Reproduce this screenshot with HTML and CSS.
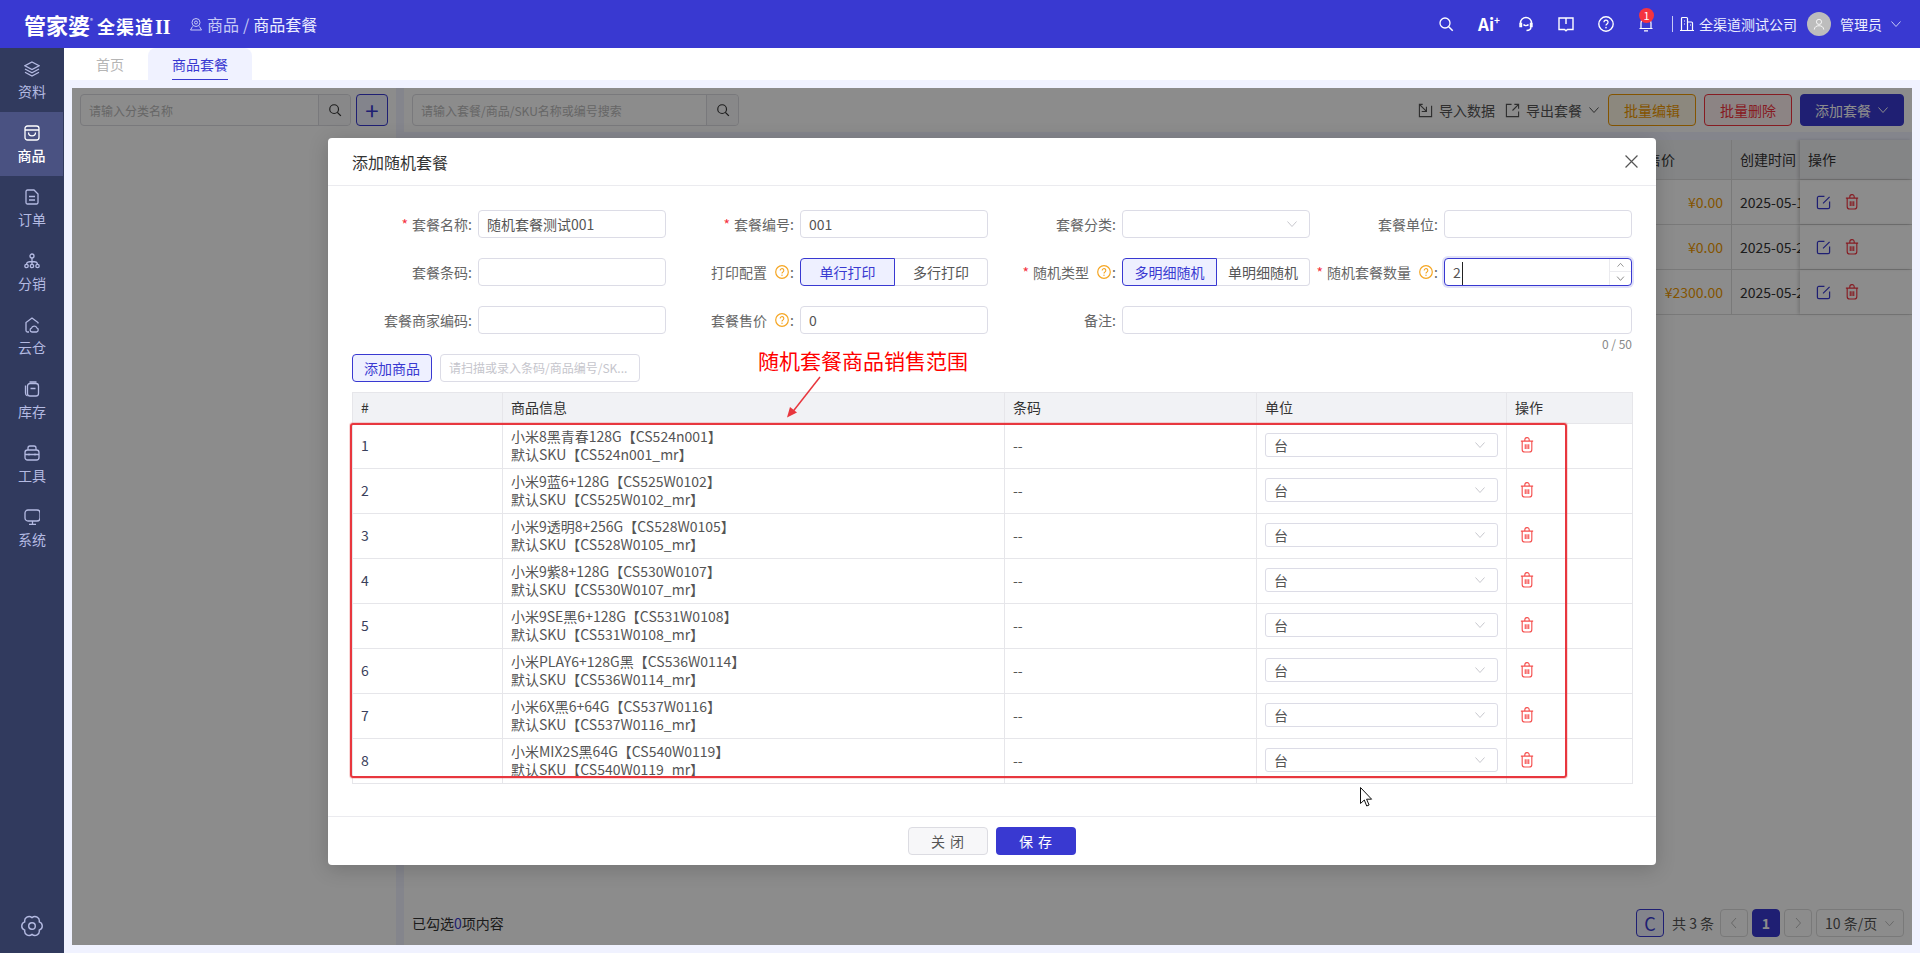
FILE: index.html
```html
<!DOCTYPE html>
<html lang="en">
<head>
    <meta charset="UTF-8">
    <meta name="viewport" content="width=device-width, initial-scale=1.0">
    <title>商品套餐</title>
    <link rel="stylesheet" href="styles.css">
</head>
<body>
    <svg class="defs" width="0" height="0">
        <symbol id="i-trash" viewBox="0 0 16 18">
            <path d="M1 4.5h14M5.5 4.5V3a2.500 2.500 0 0 1 5 0v1.500M2.500 4.500V14a3 3 0 0 0 3 3h5a3 3 0 0 0 3-3V4.500M6 8v5.500M8 8v5.500M10 8v5.500" fill="none" stroke="currentColor" stroke-width="1.3"/>
        </symbol>
        <symbol id="i-edit" viewBox="0 0 16 16">
            <path d="M9 1.5H3A1.5 1.5 0 0 0 1.500 3v10A1.500 1.500 0 0 0 3 14.500h10a1.500 1.500 0 0 0 1.500-1.500V7M14.500 2 7.500 9" fill="none" stroke="currentColor" stroke-width="1.3"/>
        </symbol>
        <symbol id="i-chev" viewBox="0 0 12 12">
            <path d="M1.5 3.5 6 8.5l4.500-5" fill="none" stroke="currentColor" stroke-width="1"/>
        </symbol>
        <symbol id="i-help" viewBox="0 0 14 14">
            <circle cx="7" cy="7" r="6.3" fill="none" stroke="currentColor" stroke-width="1.2"/>
            <path d="M5.2 5.4a1.8 1.8 0 1 1 2.800 1.500c-.7.4-1 .8-1 1.500" fill="none" stroke="currentColor" stroke-width="1.1"/>
            <circle cx="7" cy="10.2" r=".7" fill="currentColor"/>
        </symbol>
        <symbol id="i-search" viewBox="0 0 16 16">
            <circle cx="7" cy="7" r="5" fill="none" stroke="currentColor" stroke-width="1.3"/>
            <path d="m10.7 10.7 4 4" fill="none" stroke="currentColor" stroke-width="1.5"/>
        </symbol>
    </svg>

    <header class="topbar">
        <div class="logo"><span class="logo-main">管家婆</span><span class="logo-mark">®</span><span class="logo-sub">全渠道</span><span class="logo-ver">II</span></div>
        <div class="crumbs">
            <svg class="crumb-icon" viewBox="0 0 14 14"><circle cx="7" cy="5.5" r="4" fill="none" stroke="currentColor"/><circle cx="7" cy="5.5" r="1.5" fill="none" stroke="currentColor"/><path d="M3.5 9.5 1.5 13h11l-2-3.500" fill="none" stroke="currentColor"/></svg>
            <span class="crumb-parent">商品</span><span class="crumb-sep">/</span><span class="crumb-current">商品套餐</span>
        </div>
        <div class="top-actions">
            <svg class="top-icon"><use href="#i-search"/></svg>
            <span class="top-ai">Ai<sup>+</sup></span>
            <svg class="top-icon" viewBox="0 0 16 16"><path d="M2.5 9V7a5.500 5.500 0 0 1 11 0v2.500M2 7.500h1.500v3H2zM12.500 7.500H14v3h-1.500zM5.500 8.500c1 1.500 4 1.500 5 0M13 10.500c0 2.500-2 4-4.500 4" fill="none" stroke="currentColor" stroke-width="1.4"/></svg>
            <svg class="top-icon" viewBox="0 0 16 16"><path d="M1 2h14v11.500H9.500L8 14.800 6.500 13.500H1zM8 2v6" fill="none" stroke="currentColor" stroke-width="1.4"/></svg>
            <svg class="top-icon"><use href="#i-help"/></svg>
            <div class="bell">
                <svg class="top-icon" viewBox="0 0 16 16"><path d="M3 12V7a5 5 0 0 1 10 0v5M1.500 12.500h13M6 14.800h4" fill="none" stroke="currentColor" stroke-width="1.2"/></svg>
                <span class="bell-badge">1</span>
            </div>
            <span class="top-divider"></span>
            <svg class="top-build" viewBox="0 0 16 16"><path d="M1 14.500h14M2.500 14.500V2.500a1 1 0 0 1 1-1h4a1 1 0 0 1 1 1v12M8.500 6h4a1 1 0 0 1 1 1v7.500M5 5h1M5 8h1M11 9h1" fill="none" stroke="currentColor" stroke-width="1.2"/></svg>
            <span class="top-company">全渠道测试公司</span>
            <span class="avatar"><svg viewBox="0 0 14 14"><circle cx="7" cy="4.500" r="3" fill="none" stroke="#fff"/><path d="M1.500 13.500c0-6 11-6 11 0" fill="none" stroke="#fff"/></svg></span>
            <span class="top-user">管理员</span>
            <svg class="top-chev"><use href="#i-chev"/></svg>
        </div>
    </header>

    <div class="shell">
        <nav class="sidebar">
            <a class="nav-item"><svg viewBox="0 0 16 16"><path d="M8 1 15 4.800 8 8.600 1 4.800zM1 8l7 3.800L15 8M1 11.200 8 15l7-3.800"/></svg>资料</a>
            <a class="nav-item active"><svg viewBox="0 0 16 16"><rect x="1" y="1" width="14" height="14" rx="2.500"/><path d="M1 5h14M4.500 7.500c0 4.500 7 4.500 7 0"/></svg>商品</a>
            <a class="nav-item"><svg viewBox="0 0 16 16"><path d="M3.500 1h6.500L14 5v8.500a1.500 1.500 0 0 1-1.500 1.500h-9A1.500 1.500 0 0 1 2 13.500v-11A1.500 1.500 0 0 1 3.500 1zM5 7.500h6M5 11h6"/></svg>订单</a>
            <a class="nav-item"><svg viewBox="0 0 16 16"><circle cx="8" cy="3" r="2"/><circle cx="2.500" cy="13" r="1.700"/><circle cx="8" cy="13" r="1.700"/><circle cx="13.500" cy="13" r="1.700"/><path d="M8 5v6.300M8 8.500c-3.500 0-5.500.7-5.500 2.800M8 8.500c3.500 0 5.500.7 5.500 2.800"/></svg>分销</a>
            <a class="nav-item"><svg viewBox="0 0 16 16"><path d="M14 6.500V5.500L8 1 2 5.500v8A1.500 1.500 0 0 0 3.500 15H5"/><path d="M8 15a2 2 0 0 1-.5-3.900 2.800 2.800 0 0 1 5.300-.3A2.200 2.200 0 0 1 12.500 15z"/></svg>云仓</a>
            <a class="nav-item"><svg viewBox="0 0 16 16"><rect x="3.500" y="2.500" width="11" height="12.500" rx="2.500"/><path d="M1.500 4.500v7.500A3 3 0 0 0 3.500 15M5.500 1h7M6.500 7.500h5"/></svg>库存</a>
            <a class="nav-item"><svg viewBox="0 0 16 16"><rect x="1" y="5" width="14" height="10" rx="2.500"/><path d="M4 5V3a2 2 0 0 1 2-2h4a2 2 0 0 1 2 2v2M1 9.500h14M5 8.500v2M11 8.500v2"/></svg>工具</a>
            <a class="nav-item"><svg viewBox="0 0 16 16"><rect x="1" y="1" width="15" height="11" rx="3"/><path d="M8.500 12v3M5 15.300h7"/></svg>系统</a>
            <a class="nav-settings"><svg viewBox="0 0 20 20"><path d="M10 2.400A4 4 0 0 1 16.580 6.200 4 4 0 0 1 16.580 13.800 4 4 0 0 1 10 17.600 4 4 0 0 1 3.420 13.800 4 4 0 0 1 3.420 6.200 4 4 0 0 1 10 2.400z"/><circle cx="10" cy="10" r="3"/></svg></a>
        </nav>

        <main class="main">
            <div class="tabs">
                <span class="tab">首页</span>
                <span class="tab tab-active"><span class="tab-label">商品套餐</span></span>
            </div>

            <div class="content">
                <aside class="tree-panel">
                    <div class="searchbox tree-search">
                        <span class="searchbox-text">请输入分类名称</span>
                        <span class="searchbox-btn"><svg><use href="#i-search"/></svg></span>
                    </div>
                    <button class="add-square">+</button>
                </aside>

                <section class="list-col">
                    <div class="toolbar">
                        <div class="searchbox list-search">
                            <span class="searchbox-text">请输入套餐/商品/SKU名称或编号搜索</span>
                            <span class="searchbox-btn"><svg><use href="#i-search"/></svg></span>
                        </div>
                        <div class="toolbar-right">
                            <span class="tool-link"><svg viewBox="0 0 16 16"><path d="M5 1.500H1.500v13h13V3M1.500 1.500 8.500 8.500M4 9h5V4" fill="none" stroke="currentColor" stroke-width="1.2"/></svg>导入数据</span>
                            <span class="tool-link tool-link-last"><svg viewBox="0 0 16 16"><path d="M7 1.500H1.500v13h13V9M8 8l6.500-6.500M10 1.500h4.500V6" fill="none" stroke="currentColor" stroke-width="1.2"/></svg>导出套餐<svg class="tool-chev"><use href="#i-chev"/></svg></span>
                            <button class="tool-btn tool-orange">批量编辑</button>
                            <button class="tool-btn tool-red">批量删除</button>
                            <button class="tool-btn tool-primary">添加套餐<svg class="tool-chev"><use href="#i-chev"/></svg></button>
                        </div>
                    </div>

                    <div class="list-card">
                        <div class="bg-table">
                            <div class="bg-row bg-head">
                                <span class="bg-price">售价</span><span class="bg-date">创建时间</span><span class="bg-ops">操作</span>
                            </div>
                            <div class="bg-row">
                                <span class="bg-price money">¥0.00</span><span class="bg-date">2025-05-19</span>
                                <span class="bg-ops"><svg class="op-edit"><use href="#i-edit"/></svg><svg class="op-trash"><use href="#i-trash"/></svg></span>
                            </div>
                            <div class="bg-row">
                                <span class="bg-price money">¥0.00</span><span class="bg-date">2025-05-20</span>
                                <span class="bg-ops"><svg class="op-edit"><use href="#i-edit"/></svg><svg class="op-trash"><use href="#i-trash"/></svg></span>
                            </div>
                            <div class="bg-row">
                                <span class="bg-price money">¥2300.00</span><span class="bg-date">2025-05-20</span>
                                <span class="bg-ops"><svg class="op-edit"><use href="#i-edit"/></svg><svg class="op-trash"><use href="#i-trash"/></svg></span>
                            </div>
                        </div>

                        <div class="list-foot">
                            <span class="picked">已勾选<b>0</b>项内容</span>
                            <div class="pager">
                                <span class="pager-refresh">C</span>
                                <span class="pager-total">共 3 条</span>
                                <span class="pager-btn"><svg viewBox="0 0 10 12"><path d="M7 1 2.500 6 7 11" fill="none" stroke="currentColor"/></svg></span>
                                <span class="pager-btn pager-on">1</span>
                                <span class="pager-btn"><svg viewBox="0 0 10 12"><path d="M3 1l4.500 5L3 11" fill="none" stroke="currentColor"/></svg></span>
                                <span class="pager-size">10 条/页<svg class="tool-chev"><use href="#i-chev"/></svg></span>
                            </div>
                        </div>
                    </div>
                </section>

                <div class="overlay"></div>

                <div class="modal">
                    <div class="modal-head">
                        <span class="modal-title">添加随机套餐</span>
                        <svg class="modal-close" viewBox="0 0 12 12"><path d="M.5.500l11 11M11.500.500l-11 11" stroke="currentColor" fill="none" stroke-width="1.1"/></svg>
                    </div>

                    <div class="modal-body">
                        <div class="form-grid">
                            <div class="field">
                                <label class="field-label"><i class="req">*</i>套餐名称:</label>
                                <input class="input" type="text" value="随机套餐测试001">
                            </div>
                            <div class="field">
                                <label class="field-label"><i class="req">*</i>套餐编号:</label>
                                <input class="input" type="text" value="001">
                            </div>
                            <div class="field">
                                <label class="field-label">套餐分类:</label>
                                <div class="input select"><svg class="sel-chev"><use href="#i-chev"/></svg></div>
                            </div>
                            <div class="field">
                                <label class="field-label">套餐单位:</label>
                                <input class="input" type="text">
                            </div>

                            <div class="field">
                                <label class="field-label">套餐条码:</label>
                                <input class="input" type="text">
                            </div>
                            <div class="field">
                                <label class="field-label">打印配置<svg class="help"><use href="#i-help"/></svg>:</label>
                                <div class="segment"><span class="seg seg-on">单行打印</span><span class="seg">多行打印</span></div>
                            </div>
                            <div class="field">
                                <label class="field-label"><i class="req">*</i>随机类型<svg class="help"><use href="#i-help"/></svg>:</label>
                                <div class="segment"><span class="seg seg-on">多明细随机</span><span class="seg">单明细随机</span></div>
                            </div>
                            <div class="field">
                                <label class="field-label"><i class="req">*</i>随机套餐数量<svg class="help"><use href="#i-help"/></svg>:</label>
                                <div class="input number">
                                    <span class="number-val">2</span>
                                    <span class="spin"><svg class="spin-up"><use href="#i-chev"/></svg><svg class="spin-down"><use href="#i-chev"/></svg></span>
                                </div>
                            </div>

                            <div class="field">
                                <label class="field-label">套餐商家编码:</label>
                                <input class="input" type="text">
                            </div>
                            <div class="field">
                                <label class="field-label">套餐售价<svg class="help"><use href="#i-help"/></svg>:</label>
                                <input class="input" type="text" value="0">
                            </div>
                            <div class="field field-wide">
                                <label class="field-label">备注:</label>
                                <div class="remark">
                                    <input class="input" type="text">
                                    <span class="counter">0 / 50</span>
                                </div>
                            </div>
                        </div>

                        <div class="add-row">
                            <button class="add-btn">添加商品</button>
                            <div class="scan-input">请扫描或录入条码/商品编号/SK...</div>
                        </div>

                        <div class="goods-wrap">
                            <table class="goods">
                                <colgroup><col class="c-no"><col class="c-info"><col class="c-code"><col class="c-unit"><col class="c-op"></colgroup>
                                <thead>
                                    <tr><th>#</th><th>商品信息</th><th>条码</th><th>单位</th><th>操作</th></tr>
                                </thead>
                                <tbody>
                                    <tr><td>1</td><td>小米8黑青春128G【CS524n001】<br>默认SKU【CS524n001_mr】</td><td>--</td><td><div class="unit">台<svg class="sel-chev"><use href="#i-chev"/></svg></div></td><td><svg class="row-trash"><use href="#i-trash"/></svg></td></tr>
                                    <tr><td>2</td><td>小米9蓝6+128G【CS525W0102】<br>默认SKU【CS525W0102_mr】</td><td>--</td><td><div class="unit">台<svg class="sel-chev"><use href="#i-chev"/></svg></div></td><td><svg class="row-trash"><use href="#i-trash"/></svg></td></tr>
                                    <tr><td>3</td><td>小米9透明8+256G【CS528W0105】<br>默认SKU【CS528W0105_mr】</td><td>--</td><td><div class="unit">台<svg class="sel-chev"><use href="#i-chev"/></svg></div></td><td><svg class="row-trash"><use href="#i-trash"/></svg></td></tr>
                                    <tr><td>4</td><td>小米9紫8+128G【CS530W0107】<br>默认SKU【CS530W0107_mr】</td><td>--</td><td><div class="unit">台<svg class="sel-chev"><use href="#i-chev"/></svg></div></td><td><svg class="row-trash"><use href="#i-trash"/></svg></td></tr>
                                    <tr><td>5</td><td>小米9SE黑6+128G【CS531W0108】<br>默认SKU【CS531W0108_mr】</td><td>--</td><td><div class="unit">台<svg class="sel-chev"><use href="#i-chev"/></svg></div></td><td><svg class="row-trash"><use href="#i-trash"/></svg></td></tr>
                                    <tr><td>6</td><td>小米PLAY6+128G黑【CS536W0114】<br>默认SKU【CS536W0114_mr】</td><td>--</td><td><div class="unit">台<svg class="sel-chev"><use href="#i-chev"/></svg></div></td><td><svg class="row-trash"><use href="#i-trash"/></svg></td></tr>
                                    <tr><td>7</td><td>小米6X黑6+64G【CS537W0116】<br>默认SKU【CS537W0116_mr】</td><td>--</td><td><div class="unit">台<svg class="sel-chev"><use href="#i-chev"/></svg></div></td><td><svg class="row-trash"><use href="#i-trash"/></svg></td></tr>
                                    <tr><td>8</td><td>小米MIX2S黑64G【CS540W0119】<br>默认SKU【CS540W0119_mr】</td><td>--</td><td><div class="unit">台<svg class="sel-chev"><use href="#i-chev"/></svg></div></td><td><svg class="row-trash"><use href="#i-trash"/></svg></td></tr>
                                </tbody>
                            </table>
                            <div class="note-box"></div>
                            <span class="note-text">随机套餐商品销售范围</span>
                            <svg class="note-arrow" viewBox="0 0 36 42"><path d="M34 1 5 38" fill="none" stroke="#e8373e" stroke-width="1.5"/><path d="M1 41.500 4 31l7 5.500z" fill="#e8373e"/></svg>
                        </div>
                    </div>

                    <div class="modal-foot">
                        <button class="btn-close">关 闭</button>
                        <button class="btn-save">保 存</button>
                    </div>

                    <svg class="cursor" viewBox="0 0 13 20"><path d="M.5.500v16l3.800-3.500 2.400 6 2.400-1-2.500-5.800h5z" fill="#fff" stroke="#111" stroke-width="1"/></svg>
                </div>
            </div>
        </main>
    </div>
</body>
</html>
```

FILE: styles.css
```css
* {
    margin: 0;
    padding: 0;
    box-sizing: border-box;
    font-family: "Noto Sans CJK SC", "Noto Sans", sans-serif;
}

body {
    width: 1920px;
    height: 953px;
    overflow: hidden;
    background: #f0f2ff;
    font-size: 14px;
    color: #333;
}

svg {
    display: block;
}

button {
    border: none;
    background: none;
    font-size: 14px;
}

.defs {
    position: absolute;
}

/* top bar */
.topbar {
    height: 48px;
    background: #3939d1;
    display: flex;
    align-items: center;
    color: #fff;
}

.logo {
    display: flex;
    align-items: baseline;
    width: 189px;
    padding-left: 24px;
    font-weight: 700;
    white-space: nowrap;
}

.logo-main {
    font-size: 22px;
    line-height: 30px;
}

.logo-mark {
    font-size: 6px;
    width: 7px;
    align-self: flex-start;
    line-height: 24px;
    font-weight: 400;
}

.logo-sub {
    font-size: 18px;
    letter-spacing: 1px;
}

.logo-ver {
    font-family: "Liberation Serif", serif;
    font-size: 20px;
    margin-left: 1px;
}

.crumbs {
    display: flex;
    align-items: center;
    font-size: 16px;
}

.crumb-icon {
    width: 14px;
    height: 14px;
    margin-right: 4px;
    color: #c6c9f6;
}

.crumb-parent {
    color: #c6c9f6;
}

.crumb-sep {
    margin: 0 4px;
    color: #c6c9f6;
}

.crumb-current {
    color: #eceeff;
}

.top-actions {
    margin-left: auto;
    display: flex;
    align-items: center;
    height: 48px;
    padding-right: 18px;
}

.top-icon {
    width: 16px;
    height: 16px;
    margin-right: 24px;
}

.top-ai {
    width: 16px;
    margin-right: 24px;
    font-size: 17px;
    font-weight: 700;
    line-height: 16px;
    white-space: nowrap;
}

.top-ai sup {
    font-size: 10px;
    line-height: 0;
}

.bell {
    position: relative;
    width: 16px;
    height: 16px;
}

.bell .top-icon {
    margin: 0;
}

.bell-badge {
    position: absolute;
    top: -8px;
    left: 1px;
    width: 15px;
    height: 15px;
    border-radius: 50%;
    background: #f5333f;
    color: #fff;
    font-size: 11px;
    line-height: 15px;
    text-align: center;
}

.top-divider {
    width: 1px;
    height: 16px;
    background: #c6c9f6;
    margin: 0 6px 0 18px;
}

.top-build {
    width: 16px;
    height: 16px;
    margin-right: 4px;
}

.top-company {
    color: #eceeff;
    margin-right: 10px;
}

.avatar {
    width: 24px;
    height: 24px;
    border-radius: 50%;
    background: #bdbdbd;
    display: flex;
    align-items: center;
    justify-content: center;
    margin-right: 9px;
}

.avatar svg {
    width: 12px;
    height: 12px;
}

.top-user {
    color: #eceeff;
}

.top-chev {
    width: 12px;
    height: 12px;
    margin-left: 8px;
    color: #c6c9f6;
}

/* side nav */
.shell {
    display: flex;
    height: 905px;
}

.sidebar {
    width: 64px;
    background: #313a5e;
    display: flex;
    flex-direction: column;
    flex-shrink: 0;
}

.nav-item {
    height: 64px;
    display: flex;
    flex-direction: column;
    align-items: center;
    padding-top: 13px;
    color: #b4bae2;
    font-size: 14px;
    line-height: 20px;
}

.nav-item svg {
    width: 16px;
    height: 16px;
    margin-bottom: 4px;
    fill: none;
    stroke: currentColor;
    stroke-width: 1.3;
}

.nav-item.active {
    background: #4a5282;
    color: #fff;
    margin-right: 1px;
    font-weight: 500;
}

.nav-settings {
    margin-top: auto;
    height: 38px;
    display: flex;
    justify-content: center;
    color: #b4bae2;
}

.nav-settings svg {
    width: 22px;
    height: 22px;
    fill: none;
    stroke: currentColor;
    stroke-width: 1.3;
}

/* tabs and page */
.main {
    flex: 1;
    display: flex;
    flex-direction: column;
    min-width: 0;
}

.tabs {
    height: 32px;
    background: #fff;
    display: flex;
    flex-shrink: 0;
}

.tab {
    width: 84px;
    padding-left: 8px;
    text-align: center;
    line-height: 32px;
    color: #b5b5b5;
}

.tab-active {
    width: 104px;
    padding-left: 0;
    background: #f0f2ff;
    border-radius: 8px 8px 0 0;
    color: #3939d1;
}

.tab-label {
    display: inline-block;
    height: 32px;
    border-bottom: 1px solid #3939d1;
}

.content {
    position: relative;
    flex: 1;
    margin: 8px;
    display: flex;
    gap: 8px;
}

.tree-panel {
    width: 324px;
    background: #fff;
    padding: 6px 8px;
    display: flex;
    gap: 5px;
    align-items: flex-start;
}

.searchbox {
    height: 32px;
    border: 1px solid #dcdce2;
    border-radius: 4px;
    display: flex;
    align-items: center;
    background: #fff;
}

.tree-search {
    width: 271px;
}

.list-search {
    width: 327px;
}

.searchbox-text {
    flex: 1;
    padding-left: 8px;
    font-size: 12px;
    color: #bbb;
    white-space: nowrap;
}

.searchbox-btn {
    width: 32px;
    height: 30px;
    border-left: 1px solid #dcdce2;
    background: #f7f7f9;
    display: flex;
    align-items: center;
    justify-content: center;
    border-radius: 0 4px 4px 0;
}

.searchbox-btn svg {
    width: 14px;
    height: 14px;
    color: #333;
}

.add-square {
    width: 32px;
    height: 32px;
    border: 1px solid #3939d1;
    border-radius: 4px;
    background: #eef0ff;
    color: #3939d1;
    font-size: 24px;
    line-height: 28px;
}

.list-col {
    flex: 1;
    min-width: 0;
    display: flex;
    flex-direction: column;
    gap: 8px;
}

.toolbar {
    height: 44px;
    background: #fff;
    padding: 6px 8px;
    display: flex;
    align-items: flex-start;
    justify-content: space-between;
}

.toolbar-right {
    display: flex;
    align-items: center;
    height: 32px;
}

.tool-link {
    display: flex;
    align-items: center;
    gap: 6px;
    margin-right: 10px;
    color: #555;
}

.tool-link-last {
    margin-right: 0;
}

.tool-link svg {
    width: 15px;
    height: 15px;
}

.tool-link .tool-chev {
    width: 12px;
    height: 12px;
}

.tool-btn {
    width: 88px;
    height: 32px;
    margin-left: 8px;
    border-radius: 4px;
    border: 1px solid;
}

.tool-orange {
    border-color: #f09a00;
    background: #fff7e6;
    color: #f09a00;
}

.tool-red {
    border-color: #f5333f;
    background: #fff0f0;
    color: #f5333f;
}

.tool-primary {
    width: 104px;
    background: #3939d1;
    border-color: #3939d1;
    color: #fff;
    display: flex;
    align-items: center;
    justify-content: center;
    gap: 6px;
}

.tool-primary svg {
    width: 12px;
    height: 12px;
}

.list-card {
    flex: 1;
    background: #fff;
    display: flex;
    flex-direction: column;
}

.bg-table {
    height: 183px;
}

.bg-row {
    height: 45px;
    display: flex;
    justify-content: flex-end;
    border-bottom: 1px solid #ddd;
    line-height: 44px;
    white-space: nowrap;
}

.bg-head {
    height: 40px;
    line-height: 39px;
    background: #f1f2f5;
}

.bg-price {
    width: 100px;
    padding-right: 8px;
    text-align: right;
    border-right: 1px solid #ddd;
}

.bg-head .bg-price {
    padding-right: 56px;
}

.money {
    color: #f09a00;
}

.bg-date {
    width: 68px;
    padding-left: 8px;
    overflow: hidden;
}

.bg-ops {
    width: 112px;
    padding-left: 8px;
    display: flex;
    align-items: center;
    gap: 14px;
    box-shadow: -2px 0 3px rgba(0, 0, 0, 0.15);
}

.op-edit {
    width: 15px;
    height: 15px;
    margin-left: 8px;
    color: #3939d1;
}

.op-trash {
    width: 14px;
    height: 16px;
    color: #f5333f;
}

.list-foot {
    margin-top: auto;
    padding: 0 8px 8px;
    display: flex;
    align-items: center;
    justify-content: space-between;
}

.picked b {
    font-weight: 400;
    color: #3939d1;
}

.pager {
    display: flex;
    align-items: center;
    gap: 4px;
    height: 28px;
}

.pager-refresh,
.pager-btn {
    width: 28px;
    height: 28px;
    border: 1px solid #ddd;
    border-radius: 4px;
    display: flex;
    align-items: center;
    justify-content: center;
    color: #bbb;
}

.pager-btn svg {
    width: 10px;
    height: 12px;
}

.pager-refresh {
    border-color: #3939d1;
    background: #eef0ff;
    color: #3939d1;
    font-size: 18px;
    margin-right: 4px;
}

.pager-total {
    width: 44px;
    white-space: nowrap;
    color: #555;
}

.pager-on {
    background: #3939d1;
    border-color: #3939d1;
    color: #fff;
    font-weight: 700;
}

.pager-size {
    width: 88px;
    height: 28px;
    border: 1px solid #ddd;
    border-radius: 4px;
    display: flex;
    align-items: center;
    justify-content: space-between;
    padding: 0 8px;
    color: #555;
    white-space: nowrap;
}

.pager-size svg {
    width: 11px;
    height: 11px;
    color: #bbb;
}

.overlay {
    position: absolute;
    inset: 0;
    background: rgba(0, 0, 0, 0.45);
}

/* modal */
.modal {
    position: absolute;
    left: 256px;
    top: 50px;
    width: 1328px;
    height: 727px;
    background: #fff;
    border-radius: 4px;
    box-shadow: 0 4px 20px rgba(0, 0, 0, 0.18);
    display: flex;
    flex-direction: column;
}

.modal-head {
    height: 48px;
    padding: 0 18px 0 24px;
    border-bottom: 1px solid #ebebef;
    display: flex;
    align-items: center;
    justify-content: space-between;
    flex-shrink: 0;
}

.modal-title {
    font-size: 16px;
    color: #333;
}

.modal-close {
    width: 13px;
    height: 13px;
    color: #555;
}

.modal-body {
    flex: 1;
    padding: 24px 24px 0;
    min-height: 0;
}

.form-grid {
    margin-left: -8px;
    display: grid;
    grid-template-columns: repeat(4, 322px);
    grid-auto-rows: 28px;
    row-gap: 20px;
}

.field {
    display: flex;
    align-items: center;
}

.field-wide {
    grid-column: span 2;
}

.field-label {
    width: 134px;
    padding-right: 6px;
    flex-shrink: 0;
    display: flex;
    align-items: center;
    justify-content: flex-end;
    color: #666;
    white-space: nowrap;
}

.req {
    color: #f5333f;
    font-style: normal;
    margin-right: 4px;
}

.help {
    width: 14px;
    height: 14px;
    margin: 0 1px 0 8px;
    color: #f5a623;
}

.input {
    width: 188px;
    height: 28px;
    border: 1px solid #dcdce6;
    border-radius: 4px;
    padding: 0 8px;
    font-size: 14px;
    color: #555;
    background: #fff;
    outline: none;
}

.select {
    display: flex;
    align-items: center;
    justify-content: flex-end;
    padding-right: 11px;
}

.sel-chev {
    width: 12px;
    height: 12px;
    color: #c8c8ce;
}

.segment {
    width: 188px;
    height: 28px;
    display: flex;
}

.seg {
    width: 93px;
    text-align: center;
    line-height: 26px;
    border: 1px solid #dcdce6;
    border-left: none;
    border-radius: 0 4px 4px 0;
    color: #555;
    white-space: nowrap;
}

.seg-on {
    width: 95px;
    border: 1px solid #3939d1;
    border-radius: 4px 0 0 4px;
    background: #eef0ff;
    color: #3939d1;
}

.number {
    display: flex;
    align-items: stretch;
    justify-content: space-between;
    padding-right: 0;
    border-color: #3939d1;
    box-shadow: 0 0 0 2px rgba(57, 57, 209, 0.15);
}

.number-val {
    line-height: 20px;
    margin-top: 3px;
    padding-right: 1px;
    border-right: 1px solid #222;
}

.spin {
    width: 22px;
    border-left: 1px solid #ebebef;
    display: flex;
    flex-direction: column;
    color: #777;
}

.spin svg {
    width: 21px;
    height: 13px;
    padding: 2px 6px;
    color: #666;
}

.spin-up {
    transform: scaleY(-1);
    border-top: 1px solid #ebebef;
}

.remark {
    position: relative;
    width: 510px;
}

.remark .input {
    width: 510px;
    display: block;
}

.counter {
    position: absolute;
    top: 29px;
    right: 0;
    font-size: 12px;
    color: #888;
    line-height: 18px;
}

.add-row {
    display: flex;
    gap: 8px;
    margin-top: 20px;
}

.add-btn {
    width: 80px;
    height: 28px;
    border: 1px solid #3939d1;
    border-radius: 4px;
    background: #eef0ff;
    color: #3939d1;
}

.scan-input {
    width: 200px;
    height: 28px;
    border: 1px solid #dcdce6;
    border-radius: 4px;
    padding-left: 8px;
    font-size: 12px;
    line-height: 26px;
    color: #c5c5cc;
    white-space: nowrap;
    overflow: hidden;
}

.goods-wrap {
    position: relative;
    margin-top: 10px;
}

.goods {
    width: 1280px;
    table-layout: fixed;
    border-collapse: collapse;
}

.c-no { width: 150px; }
.c-info { width: 502px; }
.c-code { width: 252px; }
.c-unit { width: 250px; }
.c-op { width: 126px; }

.goods th,
.goods td {
    border: 1px solid #e6e6ea;
    padding: 0 8px 2px;
    text-align: left;
    font-weight: 400;
    line-height: 18px;
    white-space: nowrap;
}

.goods th {
    height: 31px;
    background: #f1f2f5;
}

.goods td {
    height: 45px;
    color: #555;
}

.goods td:first-child {
    color: #3a3f5c;
}

.unit {
    width: 233px;
    height: 24px;
    border: 1px solid #dcdce6;
    border-radius: 3px;
    padding: 0 11px 0 8px;
    display: flex;
    align-items: center;
    justify-content: space-between;
    line-height: 22px;
}

.row-trash {
    width: 14px;
    height: 16px;
    color: #f5504f;
    margin-left: 5px;
}

.note-box {
    position: absolute;
    left: -2px;
    top: 31px;
    width: 1217px;
    height: 355px;
    border: 2px solid #e8373e;
    border-radius: 3px;
    box-shadow: 0 0 0 1px rgba(232, 55, 62, 0.2);
}

.note-text {
    position: absolute;
    left: 406px;
    top: -46px;
    font-size: 21px;
    line-height: 28px;
    color: #f00;
    white-space: nowrap;
}

.note-arrow {
    position: absolute;
    left: 434px;
    top: -16px;
    width: 36px;
    height: 42px;
}

.modal-foot {
    height: 49px;
    flex-shrink: 0;
    border-top: 1px solid #ebebef;
    display: flex;
    justify-content: center;
    align-items: flex-start;
    padding-top: 10px;
    gap: 8px;
}

.btn-close,
.btn-save {
    width: 80px;
    height: 28px;
    border-radius: 4px;
    font-size: 14px;
    letter-spacing: 1px;
}

.btn-close {
    border: 1px solid #dcdce2;
    background: #f7f7f9;
    color: #555;
}

.btn-save {
    background: #3939d1;
    color: #fff;
}

.cursor {
    position: absolute;
    left: 1032px;
    top: 649px;
    width: 13px;
    height: 20px;
}
```
